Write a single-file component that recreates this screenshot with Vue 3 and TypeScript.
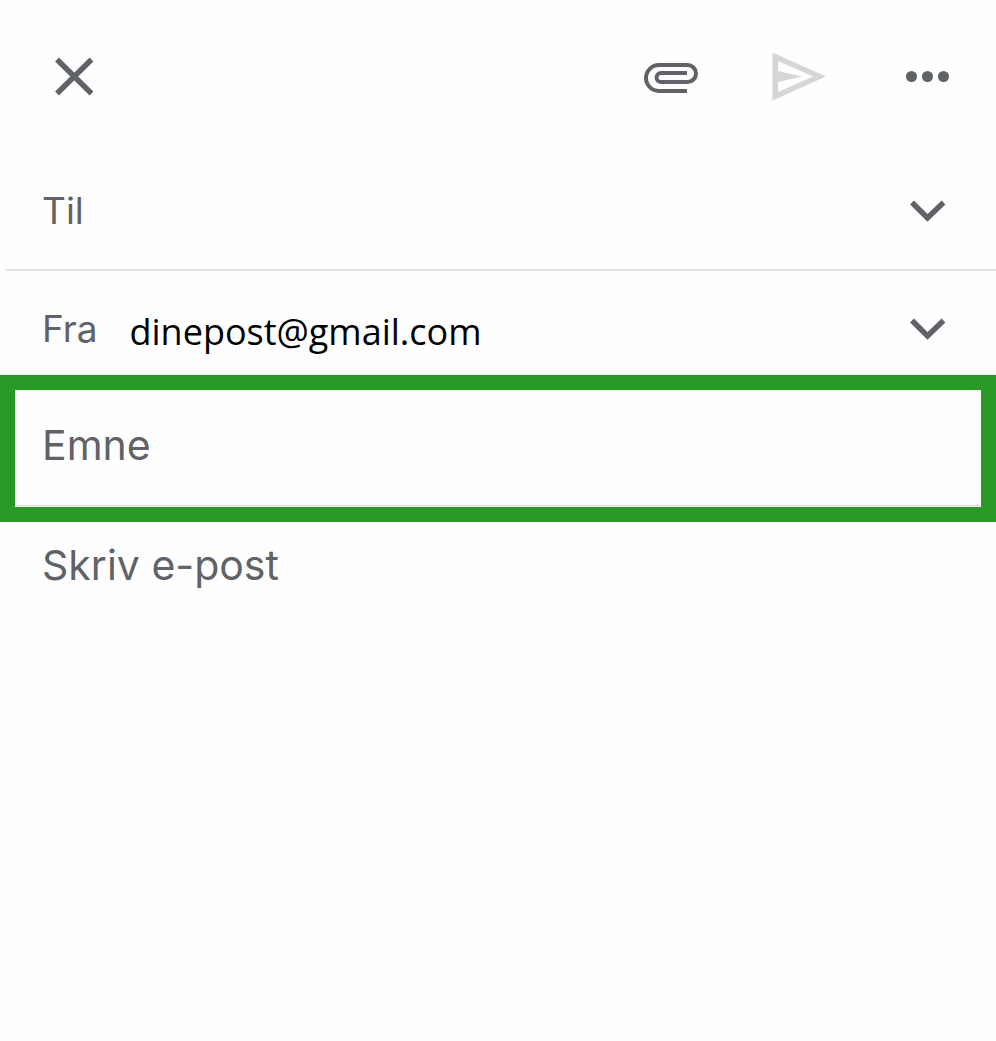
<script setup lang="ts">
import { ref } from 'vue'

const to = ref('')
const from = ref('dinepost@gmail.com')
const subject = ref('')
const body = ref('')
</script>

<template>
  <form class="compose" @submit.prevent>
    <header class="toolbar">
      <button class="icon-button" type="button" aria-label="Lukk">
        <svg viewBox="0 0 60 60" aria-hidden="true">
          <path d="M13 13.5 47.5 47.5M47.5 13.5 13 47.5" fill="none" stroke="currentColor" stroke-width="5.5" />
        </svg>
      </button>
      <div class="actions">
        <button class="icon-button" type="button" aria-label="Legg ved fil">
          <svg viewBox="0 0 60 60" aria-hidden="true">
            <path
              d="M45 45H17a13 13 0 0 1 0-26H45.5a8.5 8.5 0 0 1 0 17H19a4.5 4.5 0 0 1 0-9H45"
              fill="none"
              stroke="currentColor"
              stroke-width="4"
            />
          </svg>
        </button>
        <button class="icon-button send" type="submit" aria-label="Send">
          <svg viewBox="0 0 60 60" aria-hidden="true">
            <path
              fill-rule="evenodd"
              fill="currentColor"
              d="M2.5 6.5 56 30.5 2.5 54.5ZM8 15V25L32 30.5 8 36V46L43 30.5Z"
            />
          </svg>
        </button>
        <button class="icon-button" type="button" aria-label="Flere valg">
          <svg viewBox="0 0 60 60" aria-hidden="true" fill="currentColor">
            <circle cx="13.5" cy="30.5" r="5.5" />
            <circle cx="29.5" cy="30.5" r="5.5" />
            <circle cx="45.5" cy="30.5" r="5.5" />
          </svg>
        </button>
      </div>
    </header>

    <div class="row to-row">
      <label for="to">Til</label>
      <input id="to" v-model="to" type="email" />
      <button class="icon-button" type="button" aria-label="Vis kopi og blindkopi">
        <svg viewBox="0 0 60 60" aria-hidden="true">
          <path d="M14 21.5 29.5 37 45.5 21.5" fill="none" stroke="currentColor" stroke-width="5.5" />
        </svg>
      </button>
    </div>

    <div class="row from-row">
      <label for="from">Fra</label>
      <input id="from" v-model="from" class="address" type="email" />
      <button class="icon-button" type="button" aria-label="Velg avsender">
        <svg viewBox="0 0 60 60" aria-hidden="true">
          <path d="M14 21.5 29.5 37 45.5 21.5" fill="none" stroke="currentColor" stroke-width="5.5" />
        </svg>
      </button>
    </div>

    <div class="subject">
      <input v-model="subject" type="text" placeholder="Emne" aria-label="Emne" />
    </div>

    <textarea v-model="body" class="body" placeholder="Skriv e-post" aria-label="Skriv e-post"></textarea>
  </form>
</template>

<style>
body {
  margin: 0;
  background: #fefefe;
}
</style>

<style scoped>
.compose {
  display: flex;
  flex-direction: column;
  min-height: 100vh;
  color: #5f6368;
  font-family: Inter, "Liberation Sans", sans-serif;
  font-size: 37px;
}

.compose *,
.compose {
  box-sizing: border-box;
}

button,
input,
textarea {
  margin: 0;
  padding: 0;
  border: 0;
  outline: 0;
  background: transparent;
  color: inherit;
  font: inherit;
}

.toolbar {
  display: flex;
  justify-content: space-between;
  padding: 46px 38px 46px 44px;
}

.actions {
  display: flex;
  gap: 68px;
}

.icon-button {
  flex: none;
  width: 60px;
  height: 60px;
  cursor: pointer;
}

.icon-button svg {
  display: block;
  width: 100%;
  height: 100%;
}

.send {
  color: #d6d6d6;
}

.row {
  display: flex;
  align-items: center;
  margin-left: 6px;
  padding: 0 38px 0 36px;
}

.row input {
  flex: 1;
  min-width: 0;
  height: 60px;
}

.to-row {
  height: 119px;
  border-bottom: 2px solid #e2e2e2;
}

.from-row {
  height: 104px;
  padding-top: 11px;
}

.row .address {
  margin-left: 32px;
  padding-top: 6px;
  color: #000;
  font-family: "Open Sans", "Noto Sans", sans-serif;
  font-size: 36px;
}

.subject {
  padding-bottom: 1px;
  border: 15px solid #269a24;
  background: #fefefe;
}

.subject input {
  display: block;
  width: 100%;
  height: 116px;
  padding: 0 27px 6px;
  border-bottom: 1px solid #dadada;
  font-size: 41px;
}

.body {
  flex: 1;
  display: block;
  width: 100%;
  padding: 18px 42px;
  font-size: 41px;
  line-height: 50px;
  resize: none;
}

::placeholder {
  color: #5f6368;
  opacity: 1;
}
</style>
